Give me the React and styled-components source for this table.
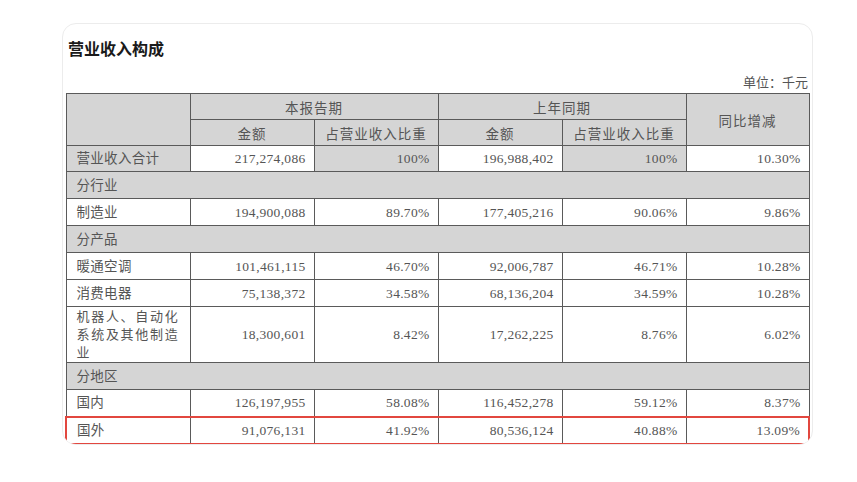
import React from "react";
import styled, { createGlobalStyle } from "styled-components";

const GlobalStyle = createGlobalStyle`
  html, body {
    margin: 0;
    padding: 0;
    background: #ffffff;
  }
`;

const Page = styled.div`
  width: 857px;
  height: 482px;
  padding: 23px 0 0 62px;
  box-sizing: border-box;
`;

const Card = styled.div`
  width: 751px;
  height: 422px;
  box-sizing: border-box;
  border: 1px solid #ececec;
  border-radius: 14px;
  overflow: hidden;
  background: #fff;
  padding: 13px 4px 0 2px;
  display: flex;
  flex-direction: column;
`;

const Title = styled.div`
  font-family: "Noto Sans CJK SC", sans-serif;
  font-weight: 700;
  font-size: 16px;
  line-height: 22px;
  color: #1a1a1a;
  padding-left: 3px;
`;

const Unit = styled.div`
  margin-top: 15px;
  font-family: "Liberation Serif", "Noto Sans CJK SC", serif;
  font-size: 13px;
  line-height: 18px;
  color: #555;
  text-align: right;
  margin-bottom: 1px;
`;

const Table = styled.table`
  width: 743px;
  table-layout: fixed;
  border-collapse: collapse;
  font-family: "Liberation Serif", "Noto Sans CJK SC", serif;
  font-size: 13.5px;
  color: #555;
  border: 1px solid #4a4a4a;
`;

const Cell = styled.td`
  box-sizing: border-box;
  height: ${(p) => p.$h}px;
  padding: 0 8px 0 10px;
  border: 1px solid #5a5a5a;
  background: ${(p) => (p.$gray ? "#d5d5d5" : "#ffffff")};
  text-align: ${(p) => p.$align || "left"};
  vertical-align: middle;
  line-height: ${(p) => (p.$spaced ? "18px" : "19px")};
  font-size: ${(p) => (p.$spaced ? "13px" : "13.5px")};
  letter-spacing: ${(p) => (p.$spaced ? "1.7px" : "0.3px")};
  white-space: ${(p) => (p.$spaced ? "normal" : "nowrap")};
  ${(p) =>
    p.$marked &&
    `
    border-top: 2px solid #e2473f;
    border-bottom: 2px solid #e2473f;
  `}
  ${(p) => p.$markLeft && `border-left: 2px solid #e2473f;`}
  ${(p) => p.$markRight && `border-right: 2px solid #e2473f;`}
`;

const HeadCell = styled.th`
  box-sizing: border-box;
  height: 26px;
  padding: 0;
  border: 1px solid #5a5a5a;
  background: #d5d5d5;
  font-weight: 400;
  text-align: center;
  vertical-align: middle;
  letter-spacing: 1px;
`;

const rows = [
  { kind: "total", label: "营业收入合计", vals: ["217,274,086", "100%", "196,988,402", "100%", "10.30%"] },
  { kind: "group", label: "分行业" },
  { label: "制造业", vals: ["194,900,088", "89.70%", "177,405,216", "90.06%", "9.86%"] },
  { kind: "group", label: "分产品" },
  { label: "暖通空调", vals: ["101,461,115", "46.70%", "92,006,787", "46.71%", "10.28%"] },
  { label: "消费电器", vals: ["75,138,372", "34.58%", "68,136,204", "34.59%", "10.28%"] },
  { label: "机器人、自动化系统及其他制造业", vals: ["18,300,601", "8.42%", "17,262,225", "8.76%", "6.02%"], tall: true },
  { kind: "group", label: "分地区" },
  { label: "国内", vals: ["126,197,955", "58.08%", "116,452,278", "59.12%", "8.37%"] },
  { label: "国外", vals: ["91,076,131", "41.92%", "80,536,124", "40.88%", "13.09%"], marked: true },
];

const App = () => {
  return (
    <Page>
      <GlobalStyle />
      <Card>
        <Title>营业收入构成</Title>
        <Unit>单位：千元</Unit>
        <Table>
          <colgroup>
            {[124, 124, 124, 124, 124, 123].map((w, i) => (
              <col key={i} style={{ width: w }} />
            ))}
          </colgroup>
          <thead>
            <tr>
              <HeadCell rowSpan={2} />
              <HeadCell colSpan={2}>本报告期</HeadCell>
              <HeadCell colSpan={2}>上年同期</HeadCell>
              <HeadCell rowSpan={2}>同比增减</HeadCell>
            </tr>
            <tr>
              <HeadCell>金额</HeadCell>
              <HeadCell>占营业收入比重</HeadCell>
              <HeadCell>金额</HeadCell>
              <HeadCell>占营业收入比重</HeadCell>
            </tr>
          </thead>
          <tbody>
            {rows.map((r, i) => {
              const h = r.kind === "total" ? 26 : r.tall ? 56 : 27;
              if (r.kind === "group") {
                return (
                  <tr key={i}>
                    <Cell $h={h} $gray colSpan={6}>
                      {r.label}
                    </Cell>
                  </tr>
                );
              }
              const total = r.kind === "total";
              return (
                <tr key={i}>
                  <Cell $h={h} $gray={total} $spaced={r.tall} $marked={r.marked} $markLeft={r.marked}>
                    {r.label}
                  </Cell>
                  {r.vals.map((v, j) => (
                    <Cell
                      key={j}
                      $h={h}
                      $align="right"
                      $gray={total && (j === 1 || j === 3)}
                      $marked={r.marked}
                      $markRight={r.marked && j === 4}
                    >
                      {v}
                    </Cell>
                  ))}
                </tr>
              );
            })}
          </tbody>
        </Table>
      </Card>
    </Page>
  );
};

export default App;
